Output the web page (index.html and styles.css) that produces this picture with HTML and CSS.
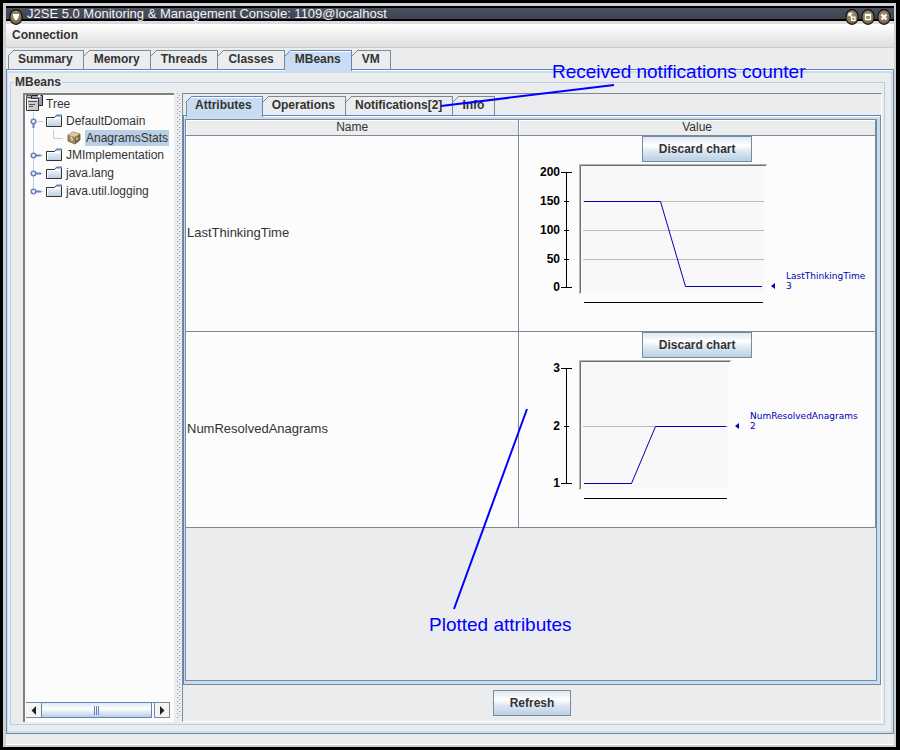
FILE: index.html
```html
<!DOCTYPE html>
<html lang="en">
<head>
<meta charset="utf-8">
<title>J2SE 5.0 Monitoring &amp; Management Console</title>
<link rel="stylesheet" href="styles.css">
</head>
<body>
<svg class="defs" width="0" height="0" aria-hidden="true">
  <defs>
    <linearGradient id="folderFill" x1="0" y1="0" x2="0" y2="1">
      <stop offset="0" stop-color="#ffffff"/><stop offset="1" stop-color="#b8cfe5"/>
    </linearGradient>
    <radialGradient id="knob" cx="0.45" cy="0.4" r="0.7">
      <stop offset="0" stop-color="#a8977a"/><stop offset="1" stop-color="#6b5a38"/>
    </radialGradient>
    <symbol id="folder" viewBox="0 0 16 14">
      <path d="M0.5 3.5H8.5L10.5 1.5H15.5V12.5H0.5Z" fill="url(#folderFill)" stroke="#333"/>
      <path d="M9 2.500L10.500 0.500H16V2.500Z" fill="#6382bf"/>
      <path d="M1.5 11.5V4.5H14" fill="none" stroke="#fff"/>
    </symbol>
    <symbol id="handle" viewBox="0 0 20 18">
      <path d="M8.5 0V18M15 9.5H18" stroke="#b8cfe5" fill="none"/>
      <path d="M11 9.5H16" stroke="#6382bf" stroke-width="2"/>
      <circle cx="8.5" cy="9.5" r="2.2" fill="#fff" stroke="#6382bf" stroke-width="1.6"/>
    </symbol>
    <symbol id="handleLast" viewBox="0 0 20 18">
      <path d="M8.5 0V9M15 9.5H18" stroke="#b8cfe5" fill="none"/>
      <path d="M11 9.5H16" stroke="#6382bf" stroke-width="2"/>
      <circle cx="8.5" cy="9.5" r="2.2" fill="#fff" stroke="#6382bf" stroke-width="1.6"/>
    </symbol>
  </defs>
</svg>

<div class="window">
  <header class="titlebar">
    <button class="knob" aria-label="Window menu"><svg viewBox="0 0 14 16"><ellipse cx="7" cy="8" rx="6.3" ry="7.3" fill="url(#knob)" stroke="#111" stroke-width="1.2"/><path d="M4 5H10V7L8 11H6L4 7Z" fill="#fff"/></svg></button>
    <h1 class="caption">J2SE 5.0 Monitoring &amp; Management Console: 1109@localhost</h1>
    <button class="knob" aria-label="Minimize"><svg viewBox="0 0 14 16"><ellipse cx="7" cy="8" rx="6.3" ry="7.3" fill="url(#knob)" stroke="#111" stroke-width="1.2"/><path d="M4 7V4.500H6.500L4.800 6.200L7.500 8.500" stroke="#fff" stroke-width="1.3" fill="none"/><rect x="6.600" y="8.200" width="3.400" height="3.200" fill="none" stroke="#fff" stroke-width="1.3"/></svg></button>
    <button class="knob" aria-label="Maximize"><svg viewBox="0 0 14 16"><ellipse cx="7" cy="8" rx="6.3" ry="7.3" fill="url(#knob)" stroke="#111" stroke-width="1.2"/><path d="M4.5 5.500H9.500V10.500H4.500ZM4.500 6.400H9.500" fill="none" stroke="#fff" stroke-width="1.3"/></svg></button>
    <button class="knob" aria-label="Close"><svg viewBox="0 0 14 16"><ellipse cx="7" cy="8" rx="6.3" ry="7.3" fill="url(#knob)" stroke="#111" stroke-width="1.2"/><path d="M4.5 5.5L9.5 10.5M9.5 5.5L4.5 10.5" stroke="#fff" stroke-width="2.2"/></svg></button>
  </header>

  <nav class="menubar"><button class="menu">Connection</button></nav>

  <main class="content">
    <div class="tabs main-tabs" role="tablist">
      <button class="tab" role="tab">Summary</button>
      <button class="tab" role="tab">Memory</button>
      <button class="tab" role="tab">Threads</button>
      <button class="tab" role="tab">Classes</button>
      <button class="tab selected" role="tab" aria-selected="true">MBeans</button>
      <button class="tab" role="tab">VM</button>
    </div>

    <div class="pane main-pane">
      <fieldset class="group">
        <legend>MBeans</legend>
        <div class="split">
          <aside class="tree-pane">
            <ul class="tree">
              <li class="node root">
                <svg width="17" height="17" viewBox="0 0 17 17"><path d="M5.5 0.5H16.5V10.5H5.5Z" fill="#9c9cb0" stroke="#222"/><path d="M12 0H14.500V2H12Z" fill="#fff"/><path d="M0.5 3.5H12.5V15.5H0.5Z" fill="#ccc" stroke="#333"/><path d="M0 0H5V4H0Z" fill="#bbb"/><path d="M0.500 4V0.500H5M1 2.500H5M2 6.500H11M3 9.500H9M3 11.500H7" stroke="#555" fill="none"/><path d="M1.5 15V4.5H12" fill="none" stroke="#fff"/></svg>
                <span class="label">Tree</span>
              </li>
              <li class="node">
                <svg class="handle" width="20" height="18" viewBox="0 0 20 18"><path d="M8.5 0V18M12 9.5H18" stroke="#b8cfe5" fill="none"/><path d="M8.5 11V16" stroke="#6382bf" stroke-width="2"/><circle cx="8.5" cy="9.5" r="2.2" fill="#fff" stroke="#6382bf" stroke-width="1.6"/></svg>
                <svg class="folder"><use href="#folder"/></svg><span class="label">DefaultDomain</span>
              </li>
              <li class="node leaf">
                <svg class="branch" width="42" height="16" viewBox="0 0 42 16"><path d="M8.5 0V16M28.5 0V8.5H38" stroke="#b8cfe5" fill="none"/></svg>
                <svg class="bean" width="14" height="14" viewBox="0 0 14 14"><path d="M1 4L6 1L13 3V9L8 13L1 10Z" fill="#a08a60" stroke="#6b5a3a" stroke-width="0.8"/><path d="M1 4L6 1L13 3L8 6Z" fill="#d8c8a0"/><path d="M8 6L13 3V9L8 13Z" fill="#7a6646"/><path d="M3 6L5 7V10M10 6V9" stroke="#f5ecd8" fill="none"/></svg>
                <span class="label picked">AnagramsStats</span>
              </li>
              <li class="node"><svg class="handle" width="20" height="18"><use href="#handle"/></svg><svg class="folder"><use href="#folder"/></svg><span class="label">JMImplementation</span></li>
              <li class="node"><svg class="handle" width="20" height="18"><use href="#handle"/></svg><svg class="folder"><use href="#folder"/></svg><span class="label">java.lang</span></li>
              <li class="node"><svg class="handle" width="20" height="18"><use href="#handleLast"/></svg><svg class="folder"><use href="#folder"/></svg><span class="label">java.util.logging</span></li>
            </ul>
            <div class="scrollbar">
              <button class="arrow" aria-label="Scroll left"><svg width="6" height="9" viewBox="0 0 6 9"><path d="M5 0V9L0.5 4.5Z" fill="#222"/></svg></button>
              <div class="thumb"><i></i><i></i><i></i></div>
              <button class="arrow" aria-label="Scroll right"><svg width="6" height="9" viewBox="0 0 6 9"><path d="M1 0V9L5.5 4.5Z" fill="#222"/></svg></button>
            </div>
          </aside>
          <div class="divider"></div>
          <section class="detail">
            <div class="tabs detail-tabs" role="tablist">
              <button class="tab selected" role="tab" aria-selected="true">Attributes</button>
              <button class="tab" role="tab">Operations</button>
              <button class="tab" role="tab">Notifications[2]</button>
              <button class="tab" role="tab">Info</button>
            </div>
            <div class="pane detail-pane">
              <div class="table-scroll">
                <table class="attributes">
                  <colgroup><col class="name-col"><col></colgroup>
                  <thead><tr><th>Name</th><th>Value</th></tr></thead>
                  <tbody>
                    <tr>
                      <td>LastThinkingTime</td>
                      <td>
                        <div class="value">
                          <button class="push">Discard chart</button>
                          <svg class="chart" viewBox="0 0 356 169">
                            <rect class="plot" x="62" y="4" width="183" height="127"/>
                            <path class="edge-light" d="M60.500 132V2.500H248"/>
                            <path class="edge-dark" d="M61.500 131V3.500H247"/>
                            <path class="grid" d="M64 39.500H245M64 68.500H245M64 97.500H245"/>
                            <path class="axis" d="M47.500 10V126M42 10.500H53M45 39.500H50M45 68.500H50M45 97.500H50M42 125.500H53M65 140.500H244"/>
                            <path class="series" d="M65 39.500H141.500L166.500 124.500H243"/>
                            <path class="marker" d="M256 121V127L252 124Z"/>
                            <text class="tick" x="41" y="14">200</text>
                            <text class="tick" x="41" y="43">150</text>
                            <text class="tick" x="41" y="72">100</text>
                            <text class="tick" x="41" y="101">50</text>
                            <text class="tick" x="41" y="129">0</text>
                            <text class="series-label" x="267" y="117">LastThinkingTime</text>
                            <text class="series-label" x="267" y="127">3</text>
                          </svg>
                        </div>
                      </td>
                    </tr>
                    <tr>
                      <td>NumResolvedAnagrams</td>
                      <td>
                        <div class="value">
                          <button class="push">Discard chart</button>
                          <svg class="chart" viewBox="0 0 356 169">
                            <rect class="plot" x="62" y="4" width="147" height="127"/>
                            <path class="edge-light" d="M60.500 132V2.500H212"/>
                            <path class="edge-dark" d="M61.500 131V3.500H211"/>
                            <path class="grid" d="M64 68.500H209"/>
                            <path class="axis" d="M47.500 10V126M42 10.500H53M45 68.500H50M42 125.500H53M65 140.500H208"/>
                            <path class="series" d="M65 125.500H112.500L136.500 68.500H207"/>
                            <path class="marker" d="M220 65V71L216 68Z"/>
                            <text class="tick" x="41" y="14">3</text>
                            <text class="tick" x="41" y="72">2</text>
                            <text class="tick" x="41" y="129">1</text>
                            <text class="series-label" x="231" y="61">NumResolvedAnagrams</text>
                            <text class="series-label" x="231" y="71">2</text>
                          </svg>
                        </div>
                      </td>
                    </tr>
                  </tbody>
                </table>
              </div>
            </div>
            <div class="actions"><button class="push">Refresh</button></div>
          </section>
        </div>
      </fieldset>
    </div>
  </main>
</div>

<svg class="notes" width="900" height="750" viewBox="0 0 900 750">
  <path d="M441 106L614 85M527 409L454 609"/>
  <text x="552" y="78">Received notifications counter</text>
  <text x="429" y="631">Plotted attributes</text>
</svg>
</body>
</html>
```
FILE: styles.css
```css
* { box-sizing: border-box; }

body {
  margin: 0;
  position: relative;
  background: #000;
  color: #333;
  font-family: "Liberation Sans", Arial, sans-serif;
  font-size: 12px;
  line-height: 16px;
}

button {
  margin: 0;
  padding: 0;
  border: 0;
  background: none;
  color: inherit;
  font: inherit;
}

.defs { position: absolute; }

.window {
  min-height: 100vh;
  display: flex;
  flex-direction: column;
  border: 3px solid #000;
  border-right-width: 4px;
  padding: 3px 2px 2px 3px;
  background: #d0d0d0;
}

.titlebar {
  height: 18px;
  flex: none;
  display: flex;
  align-items: flex-start;
  gap: 2px;
  padding: 3px 3px 0 3px;
  background: linear-gradient(#000 2px, #4a505e 2px, #3e4452 13px, #000 13px, #000 15px, #dcdcdc 15px);
}

.knob { width: 14px; height: 16px; flex: none; position: relative; z-index: 1; }
.knob svg { display: block; width: 14px; height: 16px; }

.caption {
  flex: 1;
  margin: -3px 0 0 2px;
  color: #f4f4f4;
  font-size: 13px;
  font-weight: normal;
  line-height: 16px;
  white-space: nowrap;
}

.menubar {
  height: 24px;
  flex: none;
  display: flex;
  align-items: center;
  padding: 0 0 2px 6px;
  border-bottom: 1px solid #ccc;
  background: linear-gradient(#fff, #dfdfdf);
}

.menu, .tab, .push, legend { font-weight: bold; }

.content {
  flex: 1;
  display: flex;
  flex-direction: column;
  padding-bottom: 10px;
  border-bottom: 1px solid #fff;
  background: #ebecee;
}

.tabs { display: flex; padding-top: 2px; }
.main-tabs { padding-left: 2px; }

.tab {
  position: relative;
  height: 19px;
  padding: 0 10px 2px;
  border-top: 1px solid #7a8a99;
  border-right: 1px solid #7a8a99;
  line-height: 16px;
}

.tab::before {
  content: "";
  position: absolute;
  left: 0;
  top: -1px;
  width: 6px;
  height: 6px;
  background: linear-gradient(135deg, #ebecee 44%, #7a8a99 44%, #7a8a99 56%, transparent 56%);
}

.tab:first-child::after {
  content: "";
  position: absolute;
  left: 0;
  top: 5px;
  bottom: 0;
  width: 1px;
  background: #7a8a99;
}

.tab.selected {
  height: 21px;
  margin-bottom: -2px;
  padding-bottom: 4px;
  z-index: 1;
  border-color: #6382bf;
  background: #c8ddf2;
  box-shadow: inset 0 1px #fff;
}

.tab.selected::before {
  background: linear-gradient(135deg, #ebecee 44%, #6382bf 44%, #6382bf 56%, transparent 56%);
}

.pane {
  flex: 1;
  display: flex;
  border: 1px solid #7a8a99;
  border-top-color: #6382bf;
  border-left-color: #6382bf;
}

.main-pane {
  padding: 4px 8px 8px 3px;
  box-shadow: inset 0 1px #fff, inset 1px 0 #c8ddf2, inset 0 3px #c8ddf2, inset -2px -2px #c8ddf2;
}

.group {
  flex: 1;
  display: flex;
  min-width: 0;
  margin: 0;
  padding: 3px 2px 2px 12px;
  border: 1px solid #b8cfe5;
}

legend { margin-left: -9px; padding: 0 1px; height: 16px; }

.split { flex: 1; display: flex; min-width: 0; }

.tree-pane {
  width: 151px;
  flex: none;
  display: flex;
  flex-direction: column;
  border-top: 2px solid #808080;
  border-left: 2px solid #808080;
  padding: 0 4px 4px 0;
  background: #fcfcfc;
}

.tree { flex: 1; list-style: none; margin: 0; padding: 0; }

.node { display: flex; align-items: center; height: 18px; white-space: nowrap; }
.node svg { flex: none; }
.root { height: 17px; padding-left: 1px; }
.root .label { margin-left: 2px; }
.leaf { height: 16px; }

.folder { width: 16px; height: 14px; margin: 0 3px 0 1px; }
.bean { margin-right: 4px; }
.label { padding: 0 1px; }
.picked { background: #b8cfe5; }

.scrollbar { display: flex; height: 16px; margin-left: 1px; border-top: 1px solid #7a8a99; }

.arrow {
  width: 16px;
  display: flex;
  align-items: center;
  justify-content: center;
  border-right: 1px solid #7a8a99;
  border-bottom: 1px solid #7a8a99;
  background: #f4f4f4;
}

.thumb {
  flex: 1;
  display: flex;
  align-items: center;
  justify-content: center;
  gap: 1px;
  margin: -1px 2px 0 -1px;
  border: 1px solid #6382bf;
  background: linear-gradient(#dde8f3, #fff 40%, #b8cfe5);
}

.thumb i { width: 1px; height: 9px; background: #6382bf; }
.thumb + .arrow { border-left: 1px solid #7a8a99; }

.divider {
  width: 8px;
  flex: none;
  padding: 0 2px 4px 3px;
  background:
    repeating-linear-gradient(#8a96a4 0 1px, transparent 1px 4px) 0 0 / 1px 100% no-repeat,
    repeating-linear-gradient(transparent 0 2px, #8a96a4 2px 3px, transparent 3px 4px) 2px 0 / 1px 100% no-repeat;
  background-origin: content-box;
  background-clip: content-box;
}

.detail {
  flex: 1;
  min-width: 0;
  display: flex;
  flex-direction: column;
  border: 1px solid #fff;
  border-top-color: #7a8a99;
  border-left-color: #7a8a99;
}

.detail-tabs { padding-left: 3px; }
.detail-tabs .tab { padding-left: 9px; }

.detail-pane {
  padding: 3px 3px 3px 1px;
  background: linear-gradient(#fff 1px, #c8ddf2 1px);
}

.table-scroll {
  flex: 1;
  border: 1px solid #7a8a99;
  background: #ebecee;
}

.attributes {
  width: 100%;
  border-collapse: separate;
  border-spacing: 0;
  table-layout: fixed;
}

.name-col { width: 48.3%; }

.attributes th {
  height: 16px;
  padding: 0;
  border-bottom: 1px solid #7a8a99;
  border-right: 1px solid #7a8a99;
  background: #ebecee;
  box-shadow: inset 1px 1px #fff;
  font-size: 12px;
  font-weight: normal;
  line-height: 15px;
}

.attributes td {
  height: 196px;
  padding: 0 1px 2px;
  border-bottom: 1px solid #7a8a99;
  border-right: 1px solid #7a8a99;
  background: #fcfcfc;
  font-size: 13px;
}

.attributes td + td { padding: 0; }

.value { display: flex; flex-direction: column; align-items: center; }

.push {
  height: 26px;
  padding: 0 16px;
  border: 1px solid #7a8a99;
  background: linear-gradient(#dde8f3, #fff 35%, #dde8f3 60%, #b8cfe5);
  font-size: 12px;
  line-height: 16px;
}

.chart { display: block; width: 356px; height: 169px; }
.chart path { fill: none; }
.chart .plot { fill: #f8f8f8; }
.chart .edge-light { stroke: #b4b4b4; }
.chart .edge-dark { stroke: #707070; }
.chart .grid { stroke: #bcbcbc; }
.chart .axis { stroke: #000; }
.chart .series { stroke: #0000b4; }
.chart .marker { fill: #0000b4; }
.chart .tick { fill: #000; font-weight: bold; font-size: 12px; text-anchor: end; }
.chart .series-label { fill: #0000b4; font-family: "DejaVu Sans", sans-serif; font-size: 9px; }

.actions { display: flex; justify-content: center; padding: 5px 0; height: 36px; }

.notes { position: absolute; left: 0; top: 0; pointer-events: none; }
.notes path { fill: none; stroke: #00f; stroke-width: 2; }
.notes text { fill: #00f; font-size: 19px; }
```
